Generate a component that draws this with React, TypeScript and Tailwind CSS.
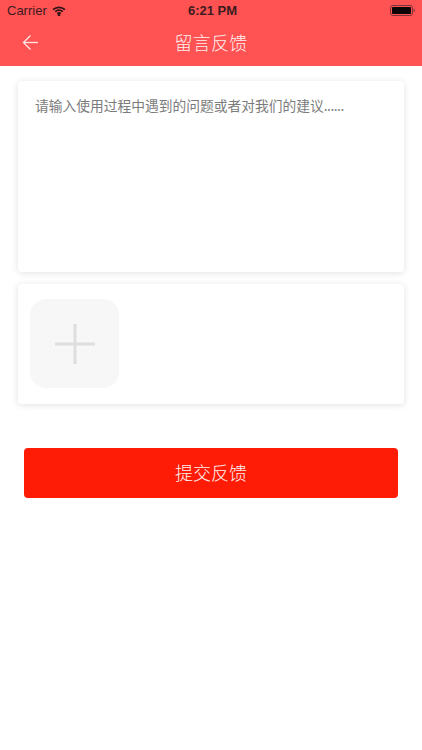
const cjk = { fontFamily: '"Noto Sans CJK SC", sans-serif' };

export default function App() {
  return (
    <div className="flex h-[750px] w-[422px] flex-col overflow-hidden bg-white" style={cjk}>
      <header className="h-[66px] shrink-0 bg-[#ff5252]">
        <div className="grid h-[21px] grid-cols-3 items-center px-[7px]">
          <div className="flex items-center gap-[5px]">
            <span className="text-[13px] leading-[20px] text-[#3b1c1f] [font-family:'Liberation_Sans',sans-serif]">Carrier</span>
            <svg width="14" height="10" viewBox="0 0 14 10" fill="none" stroke="#2a1416" strokeWidth="1.7">
              <path d="M1 3.6C4.5 .5 9.5 .5 13 3.6" />
              <path d="M3.2 5.7c2.3-2 5.3-2 7.6 0" />
              <path d="M5.3 7.7c1-.9 2.4-.9 3.4 0" />
              <circle cx="7" cy="8.9" r=".5" fill="#2a1416" />
            </svg>
          </div>
          <span className="pl-[3px] text-center text-[13px] font-bold leading-[20px] text-[#3b1c1f] [font-family:'Liberation_Sans',sans-serif]">6:21 PM</span>
          <svg className="justify-self-end" width="25" height="11" viewBox="0 0 25 11" fill="none">
            <rect x=".5" y=".5" width="22" height="10" rx="2.5" stroke="#7a3338" />
            <rect x="2" y="2" width="19" height="7" rx="1" fill="#0d0506" />
            <path d="M23.6 3.8c.8.2 1.2.8 1.2 1.7s-.4 1.5-1.2 1.7z" fill="#7a3338" />
          </svg>
        </div>
        <div className="relative flex h-[45px] items-center justify-center pb-[3px]">
          <svg className="absolute left-[22px] top-[13px]" width="17" height="17" viewBox="0 0 17 17" fill="none" stroke="#ffe9e9" strokeWidth="1.3">
            <path d="M16 8.5H1.5" />
            <path d="M8.5 1.5 1.5 8.5l7 7" />
          </svg>
          <span className="text-[18px] font-light leading-[24px] tracking-[0.3px] text-[#fff0f0]">留言反馈</span>
        </div>
      </header>

      <main className="flex flex-col px-[18px] pt-[15px]">
        <div className="h-[191px] rounded-[4px] bg-white px-[17px] pt-[14px] shadow-[0_1px_7px_rgba(0,0,0,0.12)]">
          <p className="text-[13.75px] leading-[20px] text-[#7b7b7b]">
            请输入使用过程中遇到的问题或者对我们的建议<span className="tracking-[-0.5px]">......</span>
          </p>
        </div>
        <div className="mt-[12px] h-[120px] rounded-[4px] bg-white px-[12px] pt-[15px] shadow-[0_1px_7px_rgba(0,0,0,0.12)]">
          <div className="flex h-[89px] w-[89px] items-center justify-center rounded-[16px] bg-[#f7f7f7]">
            <svg width="40" height="40" viewBox="0 0 40 40" stroke="#dedede" strokeWidth="3" strokeLinecap="round">
              <path d="M20 1v38M1 20h38" />
            </svg>
          </div>
        </div>
        <button className="mx-[6px] mt-[44px] flex h-[50px] items-center justify-center rounded-[4px] bg-[#ff1c06] pb-[2px] text-[18px] font-light text-[#fff0ee]">
          提交反馈
        </button>
      </main>
    </div>
  );
}
